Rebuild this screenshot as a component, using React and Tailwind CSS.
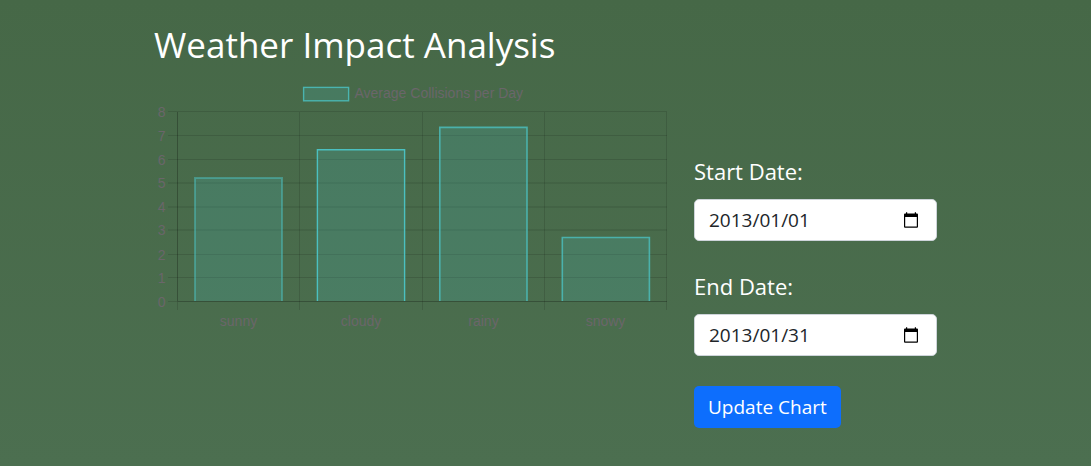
import { useState } from "react";

const TICKS = [
  { label: 8, y: 31.5, w: 1 },
  { label: 7, y: 55.5, w: 1 },
  { label: 6, y: 79.5, w: 1 },
  { label: 5, y: 103, w: 2 },
  { label: 4, y: 127, w: 2 },
  { label: 3, y: 150, w: 2 },
  { label: 2, y: 174.5, w: 1 },
  { label: 1, y: 197.5, w: 1 },
  { label: 0, y: 221.5, w: 1 },
];

const COLUMNS = [23.5, 145.5, 268.5, 390.5, 512.5];

const BARS = [
  { label: "sunny", x: 41, top: 98, right: 128, mid: 84.5, edge: 2, alpha: 0.5 },
  { label: "cloudy", x: 163.4, top: 69.7, right: 250.6, mid: 207, edge: 1.4, alpha: 1 },
  { label: "rainy", x: 285.8, top: 47.4, right: 373, mid: 329.5, edge: 1.6, alpha: 0.8 },
  { label: "snowy", x: 408.3, top: 157.5, right: 495.4, mid: 451.5, edge: 1.6, alpha: 0.8 },
];

function CollisionsChart() {
  return (
    <svg
      viewBox="0 0 514 257"
      role="img"
      aria-label="Average Collisions per Day"
      className="block w-full font-['Liberation_Sans',Arial,sans-serif] text-[14px]"
    >
      <rect x="149.6" y="7.4" width="45" height="13.4" fill="#4bc0c0" fillOpacity="0.2" stroke="#4bc0c0" strokeWidth="1.4" strokeOpacity="0.85" />
      <text x="200.5" y="18" fill="#6a666a">Average Collisions per Day</text>

      <g stroke="#000000">
        {TICKS.map((t) => (
          <line key={t.label} x1="14" x2="513" y1={t.y} y2={t.y} strokeWidth={t.w} strokeOpacity={t.w === 2 ? 0.07 : 0.12} />
        ))}
        {COLUMNS.map((x) => (
          <line key={x} x1={x} x2={x} y1="32" y2="230" strokeOpacity="0.12" />
        ))}
        <line x1="23.5" x2="23.5" y1="32" y2="221" strokeOpacity="0.14" />
        <line x1="24" x2="513" y1="221.5" y2="221.5" strokeOpacity="0.14" />
      </g>

      {BARS.map((b) => (
        <g key={b.label}>
          <rect x={b.x} y={b.top} width={b.right - b.x} height={221 - b.top} fill="#4bc0c0" fillOpacity="0.2" />
          <path d={`M${b.x} 221V${b.top}H${b.right}V221`} fill="none" stroke="#4bc0c0" strokeWidth={b.edge} strokeOpacity={b.alpha} />
          <text x={b.mid} y="246" textAnchor="middle" fill="#6a666a">{b.label}</text>
        </g>
      ))}

      {TICKS.map((t) => (
        <text key={t.label} x="11.5" y={t.y + 5} textAnchor="end" fill="#6a666a">{t.label}</text>
      ))}
    </svg>
  );
}

function DateField({ id, label, value, onChange }) {
  return (
    <div className="mb-[30px]">
      <label htmlFor={id} className="mb-[13px] block text-[22px] leading-[30px]">{label}</label>
      <div className="flex h-[42px] items-center rounded-[5px] border border-[#ced4da] bg-white pr-[17px] pl-[14px] text-[#212529]">
        <input
          id={id}
          type="text"
          value={value}
          onChange={(e) => onChange(e.target.value)}
          className="min-w-0 flex-1 bg-transparent text-[19px] leading-7 outline-none"
        />
        <button type="button" aria-label={`Pick ${label}`} className="block">
          <svg viewBox="0 0 16 17" className="block h-[17px] w-4" fill="#000000">
            <path fillRule="evenodd" d="M3 0.2H4.2V1.5H11.8V0.2H13V1.5H14Q15 1.5 15 2.5V14.8Q15 15.8 14 15.8H2Q1 15.8 1 14.8V2.5Q1 1.5 2 1.5H3ZM2.2 5V14.6H13.8V5Z" />
          </svg>
        </button>
      </div>
    </div>
  );
}

export default function App() {
  const [start, setStart] = useState("2013/01/01");
  const [end, setEnd] = useState("2013/01/31");

  return (
    <main className="min-h-screen bg-linear-to-b from-[#466847] to-[#4c6f50] font-['Open_Sans','Noto_Sans',sans-serif] text-white">
      <div className="mx-auto w-full max-w-[783px] pt-[22px]">
        <h1 className="mb-3 text-[35px] leading-[46px]">Weather Impact Analysis</h1>
        <div className="flex flex-wrap items-start gap-[26px]">
          <div className="min-w-0 flex-1">
            <CollisionsChart />
          </div>
          <form className="w-[243px] pt-[76px]" onSubmit={(e) => e.preventDefault()}>
            <DateField id="start-date" label="Start Date:" value={start} onChange={setStart} />
            <DateField id="end-date" label="End Date:" value={end} onChange={setEnd} />
            <button type="submit" className="block h-[42px] rounded-[5px] bg-[#0d6efd] px-[14px] text-[19px] leading-7">
              Update Chart
            </button>
          </form>
        </div>
      </div>
    </main>
  );
}
